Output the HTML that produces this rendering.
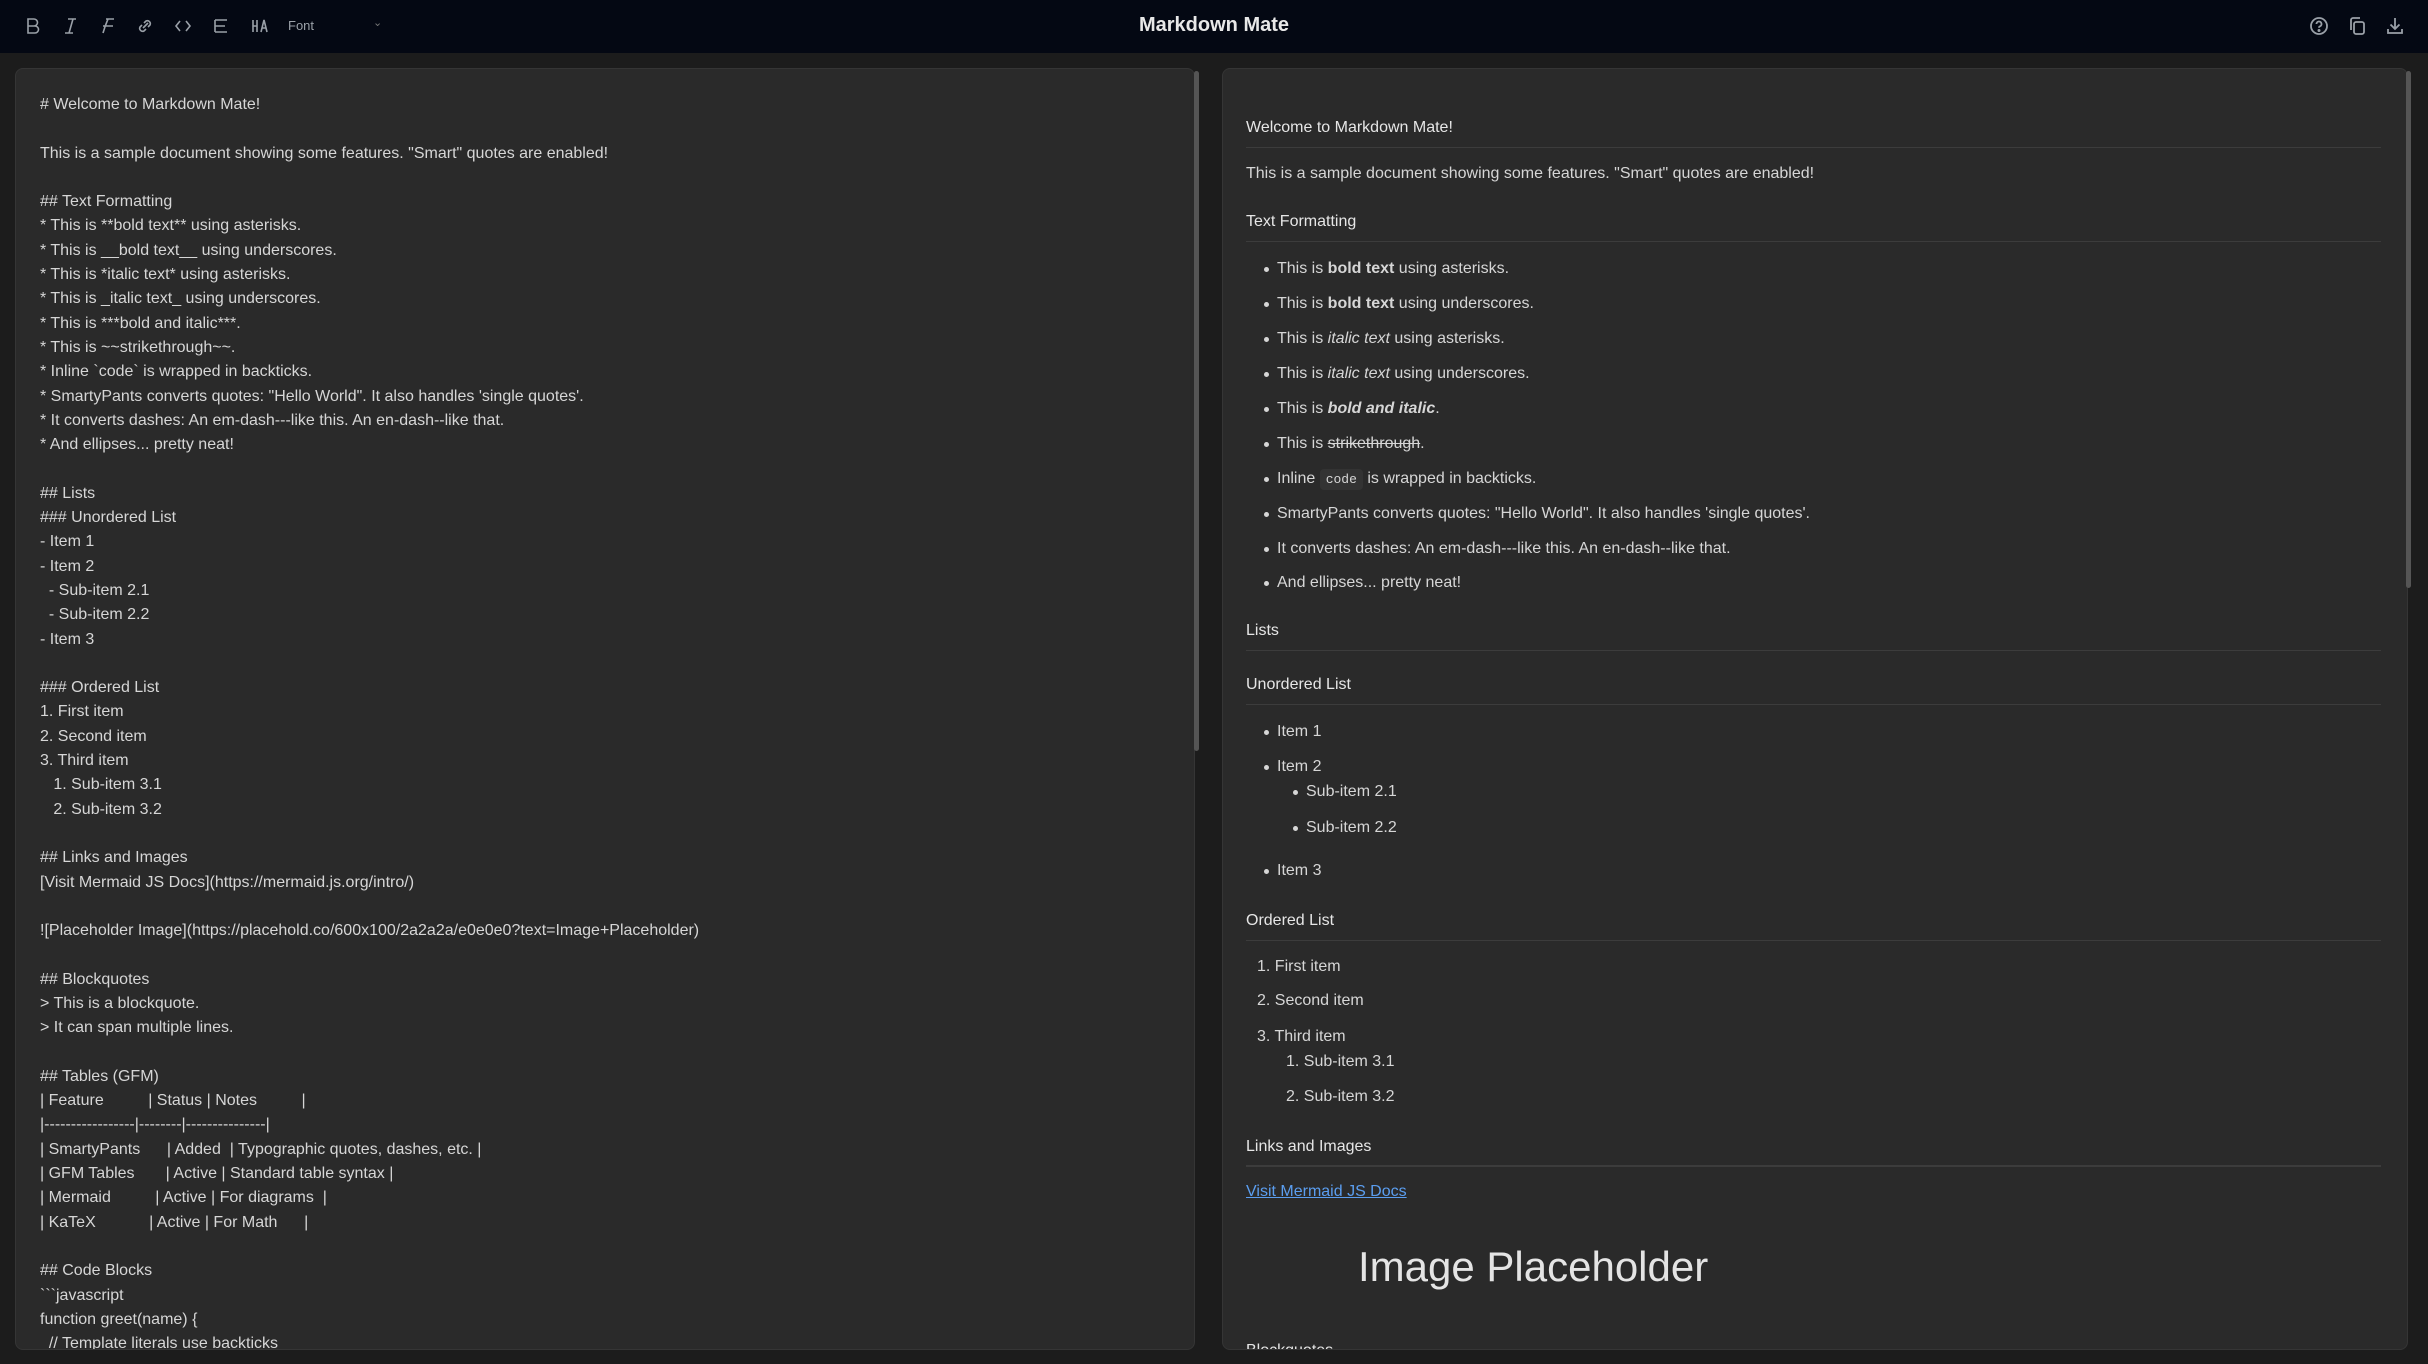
<!DOCTYPE html>
<html><head><meta charset="utf-8"><style>
*{margin:0;padding:0;box-sizing:border-box}
body{width:2428px;height:1364px;background:#1c1c1c;font-family:"Liberation Sans",sans-serif;color:#d6d6d6;overflow:hidden;position:relative}
#hdr{position:absolute;left:0;top:0;width:2428px;height:53px;background:#040813}
.ic{position:absolute;top:14px}
#title{position:absolute;left:0;width:2428px;top:14px;text-align:center;font-size:20px;font-weight:bold;color:#e8e8e8}
.panel{position:absolute;top:68px;height:1282px;background:#2a2a2a;border:1px solid #353535;border-radius:8px;overflow:hidden}
#ed{left:15px;width:1180px}
#pv{left:1222px;width:1186px}
pre{position:absolute;left:24px;top:24px;font-family:"Liberation Sans",sans-serif;font-size:16px;line-height:24.29px;color:#d6d6d6;white-space:pre}
.t{position:absolute;left:23px;font-size:16px;line-height:24px;white-space:nowrap}
.h{color:#e6e6e6}
.hr{position:absolute;left:23px;width:1135px;height:1px;background:#3c3c3c}
.b{left:54px}.b::before{content:"";position:absolute;left:-13px;top:10px;width:5px;height:5px;border-radius:50%;background:#d6d6d6}
.s{left:83px}.s::before{content:"";position:absolute;left:-13px;top:10px;width:5px;height:5px;border-radius:50%;background:#d6d6d6}
.o{left:34px}.o2{left:63px}
code{font-family:"Liberation Mono",monospace;font-size:13px;background:#333;padding:3px 6px;border-radius:4px}
a{color:#5b9ef0;text-decoration:underline}
.sb{position:absolute;width:5px;border-radius:3px;background:#555}
</style></head><body>
<div id="hdr">
<svg class="ic" style="left:22px" width="22" height="24" viewBox="0 0 22 24" fill="none" stroke="#9aa0a8" stroke-width="1.6"><path d="M6 5h6a3.5 3.5 0 0 1 0 7H6zM6 12h7a3.5 3.5 0 0 1 0 7H6z"/></svg>
<svg class="ic" style="left:60px" width="22" height="24" viewBox="0 0 22 24" fill="none" stroke="#9aa0a8" stroke-width="1.6"><path d="M8 5h8M5 19h8M13 5l-4 14"/></svg>
<svg class="ic" style="left:97px" width="22" height="24" viewBox="0 0 22 24" fill="none" stroke="#9aa0a8" stroke-width="1.6"><path d="M9 5h8M6 12h10M11 5q-3 7-5 14"/></svg>
<svg class="ic" style="left:134px" width="22" height="24" viewBox="0 0 22 24" fill="none" stroke="#9aa0a8" stroke-width="1.6"><path d="M9 14l5-5M8 11l-2 2a3 3 0 0 0 4 4l2-2M14 13l2-2a3 3 0 0 0-4-4l-2 2"/></svg>
<svg class="ic" style="left:172px" width="22" height="24" viewBox="0 0 22 24" fill="none" stroke="#9aa0a8" stroke-width="1.6"><path d="M8 7l-4 5 4 5M14 7l4 5-4 5"/></svg>
<svg class="ic" style="left:210px" width="22" height="24" viewBox="0 0 22 24" fill="none" stroke="#9aa0a8" stroke-width="1.6"><path d="M5 6v12M5 6h12M5 12h10M5 18h12"/></svg>
<svg class="ic" style="left:248px" width="22" height="24" viewBox="0 0 22 24" fill="none" stroke="#9aa0a8" stroke-width="1.6"><path d="M5 6v12M9 6v12M5 12h4M13 18l3-12 3 12M14 14h4"/></svg>
<div style="position:absolute;left:288px;top:18px;font-size:13px;color:#9aa0a8">Font</div>
<div style="position:absolute;left:373px;top:16px;font-size:11px;color:#777">⌄</div>
<div id="title">Markdown Mate</div>
<svg class="ic" style="left:2307px" width="24" height="24" viewBox="0 0 24 24" fill="none" stroke="#9aa0a8" stroke-width="1.8"><circle cx="12" cy="12" r="8"/><path d="M9.5 10a2.5 2.5 0 1 1 3.5 2.3c-.7.3-1 .8-1 1.5"/><circle cx="12" cy="16.5" r=".6" fill="#9aa0a8"/></svg>
<svg class="ic" style="left:2345px" width="24" height="24" viewBox="0 0 24 24" fill="none" stroke="#9aa0a8" stroke-width="1.8"><rect x="9" y="8" width="10" height="12" rx="2"/><path d="M6 16V6a2 2 0 0 1 2-2h7"/></svg>
<svg class="ic" style="left:2383px" width="24" height="24" viewBox="0 0 24 24" fill="none" stroke="#9aa0a8" stroke-width="1.8"><path d="M12 4v11M7.5 10.5 12 15l4.5-4.5M5 15v4h14v-4"/></svg>
</div>

<div class="panel" id="ed"><pre># Welcome to Markdown Mate!

This is a sample document showing some features. "Smart" quotes are enabled!

## Text Formatting
* This is **bold text** using asterisks.
* This is __bold text__ using underscores.
* This is *italic text* using asterisks.
* This is _italic text_ using underscores.
* This is ***bold and italic***.
* This is ~~strikethrough~~.
* Inline &#96;code&#96; is wrapped in backticks.
* SmartyPants converts quotes: "Hello World". It also handles 'single quotes'.
* It converts dashes: An em-dash---like this. An en-dash--like that.
* And ellipses... pretty neat!

## Lists
### Unordered List
- Item 1
- Item 2
  - Sub-item 2.1
  - Sub-item 2.2
- Item 3

### Ordered List
1. First item
2. Second item
3. Third item
   1. Sub-item 3.1
   2. Sub-item 3.2

## Links and Images
[Visit Mermaid JS Docs](https://mermaid.js.org/intro/)

![Placeholder Image](https://placehold.co/600x100/2a2a2a/e0e0e0?text=Image+Placeholder)

## Blockquotes
> This is a blockquote.
> It can span multiple lines.

## Tables (GFM)
| Feature          | Status | Notes          |
|-----------------|--------|---------------|
| SmartyPants      | Added  | Typographic quotes, dashes, etc. |
| GFM Tables       | Active | Standard table syntax |
| Mermaid          | Active | For diagrams  |
| KaTeX            | Active | For Math      |

## Code Blocks
&#96;&#96;&#96;javascript
function greet(name) {
  // Template literals use backticks</pre></div>
<div class="sb" style="left:1194px;top:71px;height:680px"></div>

<div class="panel" id="pv">
<div class="t h" style="top:47px">Welcome to Markdown Mate!</div><div class="hr" style="top:78px"></div>
<div class="t" style="top:93px">This is a sample document showing some features. "Smart" quotes are enabled!</div>
<div class="t h" style="top:141px">Text Formatting</div><div class="hr" style="top:172px"></div>
<div class="t b" style="top:188px">This is <b>bold text</b> using asterisks.</div>
<div class="t b" style="top:223px">This is <b>bold text</b> using underscores.</div>
<div class="t b" style="top:258px">This is <i>italic text</i> using asterisks.</div>
<div class="t b" style="top:293px">This is <i>italic text</i> using underscores.</div>
<div class="t b" style="top:328px">This is <b><i>bold and italic</i></b>.</div>
<div class="t b" style="top:363px">This is <s>strikethrough</s>.</div>
<div class="t b" style="top:398px">Inline <code>code</code> is wrapped in backticks.</div>
<div class="t b" style="top:433px">SmartyPants converts quotes: "Hello World". It also handles 'single quotes'.</div>
<div class="t b" style="top:468px">It converts dashes: An em-dash---like this. An en-dash--like that.</div>
<div class="t b" style="top:502px">And ellipses... pretty neat!</div>
<div class="t h" style="top:550px">Lists</div><div class="hr" style="top:581px"></div>
<div class="t h" style="top:604px">Unordered List</div><div class="hr" style="top:635px"></div>
<div class="t b" style="top:651px">Item 1</div>
<div class="t b" style="top:686px">Item 2</div>
<div class="t s" style="top:711px">Sub-item 2.1</div>
<div class="t s" style="top:747px">Sub-item 2.2</div>
<div class="t b" style="top:790px">Item 3</div>
<div class="t h" style="top:840px">Ordered List</div><div class="hr" style="top:871px"></div>
<div class="t o" style="top:886px">1. First item</div>
<div class="t o" style="top:920px">2. Second item</div>
<div class="t o" style="top:956px">3. Third item</div>
<div class="t o2" style="top:981px">1. Sub-item 3.1</div>
<div class="t o2" style="top:1016px">2. Sub-item 3.2</div>
<div class="t h" style="top:1066px">Links and Images</div><div class="hr" style="top:1096px;height:2px"></div>
<div class="t" style="top:1111px"><a>Visit Mermaid JS Docs</a></div>
<div class="t" style="top:1170px;left:135px;font-size:42px;line-height:56px;color:#e4e4e4">Image Placeholder</div>
<div class="t h" style="top:1270px">Blockquotes</div>
</div>
<div class="sb" style="left:2406px;top:71px;height:517px"></div>
</body></html>
